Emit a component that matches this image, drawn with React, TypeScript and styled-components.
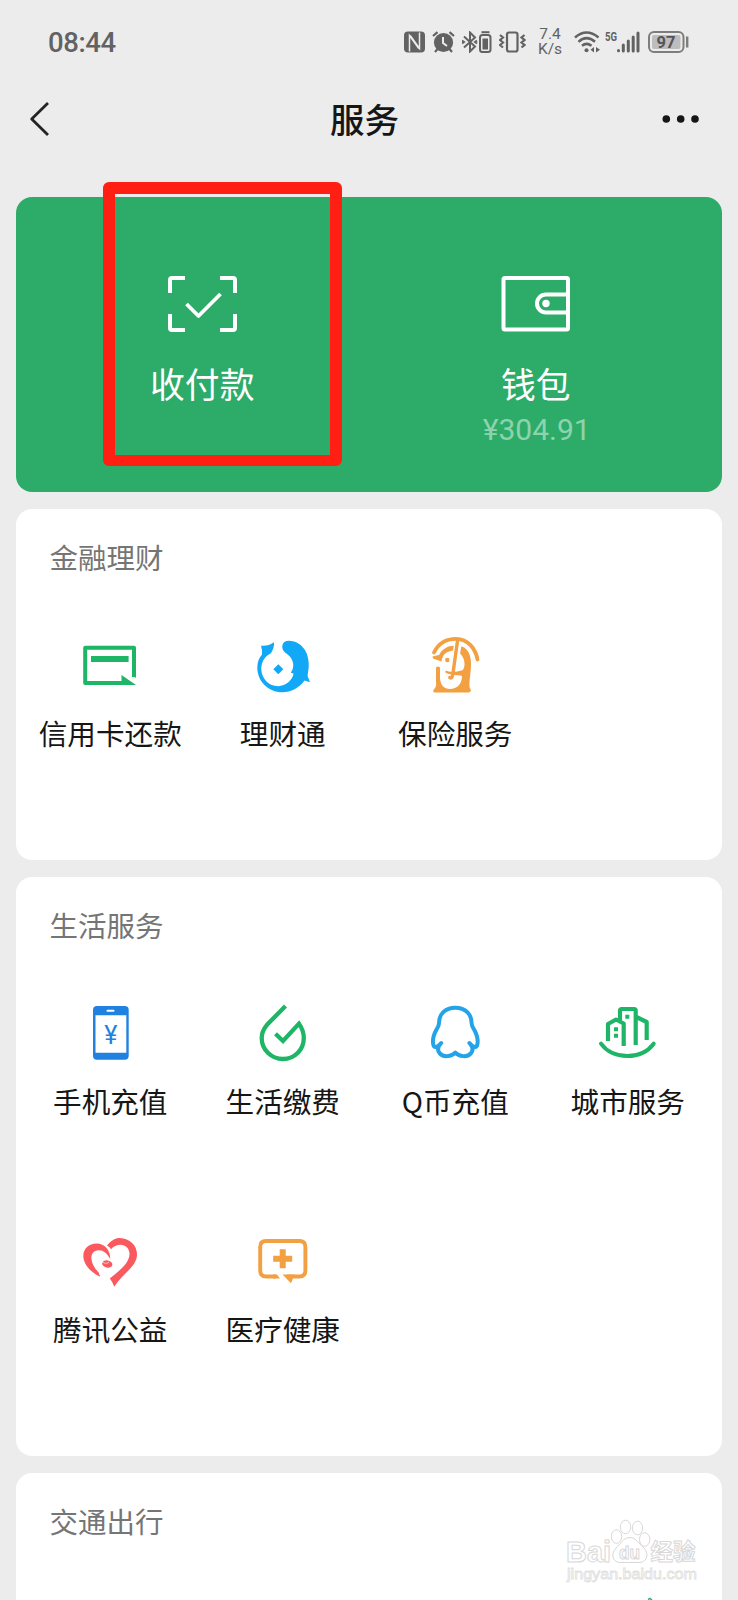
import React from "react";
import styled, { createGlobalStyle } from "styled-components";

const GlobalStyle = createGlobalStyle`
  * { box-sizing: border-box; }
  body {
    margin: 0;
    background: #ececec;
    font-family: "Noto Sans CJK SC", "Noto Sans", sans-serif;
    color: #161616;
  }
  svg { display: block; flex: none; }
`;

const Screen = styled.div`
  position: relative;
  width: 738px;
  height: 1600px;
  overflow: hidden;
  display: flex;
  flex-direction: column;
  background: #ececec;
`;

/* ---------- status bar ---------- */

const StatusBar = styled.div`
  height: 84px;
  flex: none;
  padding: 0 49px 0 48px;
  display: flex;
  align-items: center;
  justify-content: space-between;
  color: #626262;
  font-family: Roboto, sans-serif;
`;

const Clock = styled.span`
  margin-top: 1px;
  font-size: 27.5px;
  font-weight: 500;
  letter-spacing: -0.4px;
  line-height: 32px;
`;

const StatusIcons = styled.div`
  display: flex;
  align-items: center;
`;

const StatusSlot = styled.span<{ $gap: number }>`
  margin-left: ${(p) => p.$gap}px;
  display: flex;
`;

const Speed = styled.span`
  width: 24px;
  margin-left: 12px;
  display: flex;
  flex-direction: column;
  align-items: center;
  font-size: 15.5px;
  line-height: 15px;
`;

/* ---------- title bar ---------- */

const TitleBar = styled.header`
  height: 113px;
  flex: none;
  padding: 17px 38px 0 29px;
  display: grid;
  grid-template-columns: 60px 1fr 60px;
  align-items: start;
`;

const Title = styled.h1`
  margin: -3px 0 0;
  text-align: center;
  font-size: 34.5px;
  font-weight: 500;
  line-height: 40px;
`;

const BarButton = styled.span<{ $end?: boolean }>`
  height: 36px;
  display: flex;
  align-items: center;
  justify-content: ${(p) => (p.$end ? "flex-end" : "flex-start")};
`;

/* ---------- cards ---------- */

const Cards = styled.main`
  flex: 1;
  padding: 0 16px;
  display: flex;
  flex-direction: column;
  gap: 17px;
`;

const PayCard = styled.section`
  position: relative;
  height: 295px;
  flex: none;
  padding: 78px 19.5px 0;
  border-radius: 16px;
  background: #2dac69;
  display: grid;
  grid-template-columns: 1fr 1fr;
`;

const PayEntry = styled.div`
  display: flex;
  flex-direction: column;
  align-items: center;
  color: #fff;
`;

const PayLabel = styled.span`
  margin-top: 28px;
  font-size: 34.8px;
  line-height: 46px;
`;

const Amount = styled.span`
  margin: 6px 0 0 2px;
  font-family: Roboto, sans-serif;
  font-size: 30px;
  font-weight: 400;
  line-height: 36px;
  color: #8fd3ae;
`;

const Highlight = styled.div`
  position: absolute;
  left: 87px;
  top: -15px;
  width: 239px;
  height: 284px;
  border: 12px solid #ff1f13;
  border-bottom-width: 11px;
  border-radius: 6px;
`;

const Card = styled.section<{ $last?: boolean }>`
  flex: ${(p) => (p.$last ? "1" : "none")};
  padding: 0 8px 23px;
  border-radius: ${(p) => (p.$last ? "16px 16px 0 0" : "16px")};
  background: #fff;
`;

const CardTitle = styled.h2`
  margin: 0;
  height: 100px;
  padding: 27px 0 0 25.5px;
  font-size: 28.5px;
  font-weight: 400;
  line-height: 42px;
  color: #757575;
`;

const Grid = styled.div`
  display: grid;
  grid-template-columns: repeat(4, 1fr);
  grid-auto-rows: 228px;
`;

const Entry = styled.div`
  padding-top: 27px;
  display: flex;
  flex-direction: column;
  align-items: center;
`;

const EntryLabel = styled.span`
  margin-top: 16px;
  font-size: 28.6px;
  line-height: 42px;
  white-space: nowrap;
`;

const Watermark = styled.div`
  position: absolute;
  left: 560px;
  top: 1514px;
`;

/* ---------- service icons ---------- */

const Icon = ({ children }: { children: React.ReactNode }) => (
  <svg width="60" height="60" viewBox="0 0 60 60" fill="none">
    {children}
  </svg>
);

const GREEN = "#1fb566";
const SKY = "#12a8f8";
const ORANGE = "#f2a041";
const RED = "#fa5a5e";

const CardIcon = () => (
  <Icon>
    <path d="M42 47H5.2V11.7H54V41" stroke={GREEN} strokeWidth="4" strokeLinejoin="round" />
    <path d="M41.5 39 56 48.9H41.5zM52 38.8l4 3.2v-5h-4z" fill={GREEN} />
    <path d="M11 20h37.6v6H11z" fill={GREEN} />
  </Icon>
);

const FishIcon = () => (
  <Icon>
    <path
      d="M8 9.700Q15 10.500 21 6.300Q21.500 12 17.800 17.200C11 20.500 8 27 8.300 34C9 43 16 50.200 25 50.200C33 50.200 39.500 44 40.500 37.600L37.800 36.700Q40.500 33 40.300 29C40 23 36 19 32.500 17C27.500 13 28 4.700 36 4.700C47 5 55.300 14 55.700 27C56 33 54.800 37 54.600 40L57 46.300L51.500 44.500C46 52 38 56.300 29.500 56.300C15 56.300 4.500 45 4.300 32C4.300 26 6 22 9 18.500Q9.500 14 8 9.700Z"
      fill={SKY}
    />
    <path d="M25.300 28.300 30.300 33.300 25.300 38.300 20.300 33.300z" fill={SKY} />
  </Icon>
);

const InsuranceIcon = () => (
  <Icon>
    <path d="M9 16.500C13.500 7 22 2.800 31 2.800C43 3 50.500 12.500 52.500 23.500" stroke={ORANGE} strokeWidth="3.800" strokeLinecap="round" />
    <path
      d="M7.500 20.500L14 19C17 13 23 9.700 29 9.700L37 10.500C43 13 46 19 46 28C46 37 44 45 44.500 51L46 54.500Q45.500 56.500 43.500 56.500H10Q7.500 56 8.500 54C11 51 11.500 50 11 46L11 31.500Q13 29.500 15 31.500L15 43C16 49.500 19 53 25 53C32 53 37 48 37 40L33 38C37.500 36 39.700 32 39.500 27.500C39.300 22 36.500 18 32.500 15.500C26 13.500 20.500 16 18 20.500Q16.500 23.500 16.500 25.500L8 22.500Z"
      fill={ORANGE}
    />
    <path d="M33 7.500 28 36" stroke="#fff" strokeWidth="7.500" />
    <path d="M32.700 3.500 27.800 38.500Q27 43 24.800 41.500" stroke={ORANGE} strokeWidth="3.400" strokeLinecap="round" />
    <path d="M20.500 34.500Q27 37.500 38 34L36.500 39.500Q27 39.500 20.500 36.800z" fill={ORANGE} />
    <circle cx="22.300" cy="24" r="2.200" fill={ORANGE} />
  </Icon>
);

const PhoneIcon = () => (
  <Icon>
    <rect x="13" y="2" width="35.700" height="53.700" rx="4" fill="#1f82e0" />
    <path d="M15.500 11.300h30.800v37.400H15.500z" fill="#fff" />
    <path d="M27.500 6.800h6" stroke="#fff" strokeWidth="2" strokeLinecap="round" />
    <text x="30.800" y="40" textAnchor="middle" fontFamily="Roboto, sans-serif" fontSize="25" fontWeight="400" fill="#1f82e0">
      ¥
    </text>
  </Icon>
);

const DropIcon = () => (
  <Icon>
    <path
      d="M32.500 2 14 20.800C10 25.500 8.700 29 8.700 34C8.700 45.500 18 55 30 55C42 55 50.800 45.500 50.800 34C50.800 28 49 24 46 19.600L30 37 22.500 29.800"
      stroke={GREEN}
      strokeWidth="4.300"
    />
  </Icon>
);

const PenguinIcon = () => (
  <Icon>
    <path
      d="M30.300 3.700C20 3.700 14 10.500 14 19C14 22 13 23 11.500 25.500C8.500 31 7.300 36.500 8.300 40.500C9 44 12 44 16.200 39C12.500 43 12 46 14.500 49C18 54 27 52.500 30.300 48.500C33.600 52.500 42.600 54 46.100 49C48.600 46 48.100 43 44.400 39C48.600 44 51.600 44 52.300 40.500C53.300 36.500 52.100 31 49.100 25.500C47.600 23 46.600 22 46.600 19C46.600 10.500 40.600 3.700 30.300 3.700Z"
      stroke="#24a4e8"
      strokeWidth="4"
      strokeLinejoin="round"
    />
  </Icon>
);

const CityIcon = () => (
  <Icon>
    <path d="M3 39.700C9 48 19 52 29.300 52C40 52 49.500 48 55.700 39.700" stroke={GREEN} strokeWidth="4" strokeLinecap="round" />
    <path
      d="M10 37V20L18 15.500 25.700 19.500V42M22 16V6.500Q22 5 23.500 5H36Q37.700 5 37.700 6.500V41M38.500 13 48.700 18V36"
      stroke={GREEN}
      strokeWidth="4.200"
      strokeLinejoin="round"
    />
    <path d="M27.300 10.700h4v4h-4zM16 23.200h4v4h-4zM16 29.700h4v4h-4z" fill={GREEN} />
  </Icon>
);

const HeartIcon = () => (
  <Icon>
    <path
      d="M27 13.500C31 8.500 35 6 40 6C50 6.300 57.500 14 57 23C56.500 35 42 42 34.300 54.700Q32 49 29.800 46.500C39 39 48.500 32 49.500 23C50 16.500 45.500 12.500 40 12.700C36 12.800 33 14.800 31 17.300Q29.500 14.500 27 13.500Z"
      fill={RED}
    />
    <path
      d="M20.200 44.700C15 42.500 3.500 35 3.300 24C3.300 16.500 9 11.500 16.500 11.500C25 11.800 30.500 18 30.200 27C27.500 21.500 23.500 18 18.500 18.200C13.500 18.500 11 22 11.500 27C12 32.500 15.500 37 18.500 40.200Z"
      fill={RED}
    />
    <ellipse cx="27.300" cy="32" rx="5.200" ry="3.600" transform="rotate(12 27.300 32)" fill={RED} />
    <path d="M22.500 30.200Q27 32.500 29 30" stroke="#fff" strokeWidth=".6" />
  </Icon>
);

const MedicalIcon = () => (
  <Icon>
    <path
      d="M23 44.500H13Q7.200 44.500 7.200 38.500V15Q7.200 9 13 9H46.500Q52.400 9 52.400 15V38.500Q52.400 44.500 46.500 44.500H34"
      stroke={ORANGE}
      strokeWidth="3.900"
    />
    <path d="M20 42.500 24 42.500 27 46.450H20zM29.500 42.500H41.500L40 46.500 38 51.300z" fill={ORANGE} />
    <path d="M29.700 17.300V36.300M20.200 26.800H39.200" stroke={ORANGE} strokeWidth="6" />
  </Icon>
);

/* ---------- data ---------- */

type Service = { name: string; icon: React.FC };

const sections: { title: string; items: Service[] }[] = [
  {
    title: "金融理财",
    items: [
      { name: "信用卡还款", icon: CardIcon },
      { name: "理财通", icon: FishIcon },
      { name: "保险服务", icon: InsuranceIcon },
    ],
  },
  {
    title: "生活服务",
    items: [
      { name: "手机充值", icon: PhoneIcon },
      { name: "生活缴费", icon: DropIcon },
      { name: "Q币充值", icon: PenguinIcon },
      { name: "城市服务", icon: CityIcon },
      { name: "腾讯公益", icon: HeartIcon },
      { name: "医疗健康", icon: MedicalIcon },
    ],
  },
  { title: "交通出行", items: [] },
];

const Status = () => (
  <StatusBar>
    <Clock>08:44</Clock>
    <StatusIcons>
      <svg width="21" height="22" viewBox="0 0 21 22">
        <rect x="0" y=".5" width="21" height="21" rx="4" fill="#626262" />
        <path d="M5.500 20.500V4.500L14.800 17.500M15.500 1.500V17.500L6.200 4.500" fill="none" stroke="#ececec" strokeWidth="1.500" />
      </svg>
      <StatusSlot $gap={7}>
        <svg width="23" height="22" viewBox="0 0 23 22" fill="none" stroke="#626262">
          <circle cx="11.500" cy="11.500" r="9.600" fill="#626262" stroke="none" />
          <path d="M1 5 5.500 1.200M22 5 17.500 1.200M5.500 18 3 21M17.500 18 20 21" strokeWidth="2.200" />
          <path d="M11 6v6l4 3" stroke="#ececec" strokeWidth="2" />
        </svg>
      </StatusSlot>
      <StatusSlot $gap={7}>
        <svg width="30" height="22" viewBox="0 0 30 22" fill="none" stroke="#626262" strokeWidth="2">
          <path d="M2 5.500 13 15.500 8 20.500V1.500L13 6.500 2 16.500M0 9.500l2 1.500-2 1.500M15 9.500 13 11l2 1.500" />
          <rect x="18" y="4" width="10.500" height="17" rx="2.500" />
          <path d="M19.500 1.200h8" />
          <path d="M20.500 7.500h5.500v11h-5.500z" fill="#626262" stroke="none" />
        </svg>
      </StatusSlot>
      <StatusSlot $gap={7}>
        <svg width="27" height="22" viewBox="0 0 27 22" fill="none" stroke="#626262" strokeWidth="2.200">
          <rect x="8" y="1.500" width="10.500" height="19" rx="2" />
          <path d="M1 4l3 2.500-3 2.500 3 2.500-3 2.500 3 2.500M25.500 4l-3 2.500 3 2.500-3 2.500 3 2.500-3 2.500" />
        </svg>
      </StatusSlot>
      <Speed>
        <span>7.4</span>
        <span>K/s</span>
      </Speed>
      <StatusSlot $gap={12}>
        <svg width="27" height="22" viewBox="0 0 27 22" fill="none" stroke="#626262" strokeWidth="2.500">
          <path d="M1 6.500Q12.500-3.500 24.500 6.500M4.500 10.800Q12.500 3.500 21 10.800M8 14.800Q12.500 11 17.500 14.800" />
          <circle cx="12.500" cy="19.300" r="2" fill="#626262" stroke="none" />
          <path d="M16.500 18.700 20 16v5.500zM26 18.700 22 16v5.500z" fill="#626262" stroke="none" />
        </svg>
      </StatusSlot>
      <StatusSlot $gap={4}>
        <svg width="35" height="22" viewBox="0 0 35 22">
          <text x="0" y="9.500" fontFamily="Roboto, sans-serif" fontSize="12.500" fontWeight="700" textLength="12" lengthAdjust="spacingAndGlyphs" fill="#626262">
            5G
          </text>
          <path
            d="M13.500 19.500v.2M18.300 20V14M23.300 20V10M28.200 20V6M33 20V2"
            fill="none"
            stroke="#626262"
            strokeWidth="3"
            strokeLinecap="round"
          />
        </svg>
      </StatusSlot>
      <StatusSlot $gap={8}>
        <svg width="41" height="22" viewBox="0 0 41 22">
          <rect x="1" y="1" width="34.500" height="20" rx="5" fill="none" stroke="#7d7d7d" strokeWidth="2" />
          <rect x="4" y="4" width="28.500" height="14" rx="2" fill="#bdbdbd" />
          <path d="M39.200 5.500v11" stroke="#7d7d7d" strokeWidth="2.400" />
          <text x="18" y="17" textAnchor="middle" fontFamily="Roboto, sans-serif" fontSize="16.500" fontWeight="700" fill="#555">
            97
          </text>
        </svg>
      </StatusSlot>
    </StatusIcons>
  </StatusBar>
);

export default function App() {
  return (
    <>
      <GlobalStyle />
      <Screen>
        <Status />
        <TitleBar>
          <BarButton>
            <svg width="22" height="36" viewBox="0 0 22 36" fill="none">
              <path d="M19 2 2.700 18 19 34" stroke="#242424" strokeWidth="2.800" strokeLinejoin="round" />
            </svg>
          </BarButton>
          <Title>服务</Title>
          <BarButton $end>
            <svg width="40" height="10" viewBox="0 0 40 10" fill="#161616">
              <circle cx="6.300" cy="5" r="3.800" />
              <circle cx="20.700" cy="5" r="3.800" />
              <circle cx="35" cy="5" r="3.800" />
            </svg>
          </BarButton>
        </TitleBar>
        <Cards>
          <PayCard>
            <PayEntry>
              <svg width="69" height="57" viewBox="0 0 69 57" fill="none" stroke="#fff" strokeWidth="4">
                <path d="M2 18V5Q2 3 4 3H17M52 3H65Q67 3 67 5V18M67 39V53Q67 55 65 55H52M17 55H4Q2 55 2 53V39" />
                <path d="M18.500 29 30.500 41 52.500 19" strokeWidth="3.800" strokeLinejoin="round" />
              </svg>
              <PayLabel>收付款</PayLabel>
            </PayEntry>
            <PayEntry>
              <svg width="69" height="57" viewBox="0 0 69 57" fill="none" stroke="#fff" strokeWidth="4">
                <rect x="2.500" y="3" width="64.500" height="51.500" rx="1.500" />
                <path d="M66 19.500H45A9 9 0 0 0 45 37.500H66" />
                <circle cx="45" cy="28.500" r="3.700" fill="#fff" stroke="none" />
              </svg>
              <PayLabel>钱包</PayLabel>
              <Amount>¥304.91</Amount>
            </PayEntry>
            <Highlight />
          </PayCard>
          {sections.map((section, i) => (
            <Card key={section.title} $last={i === sections.length - 1}>
              <CardTitle>{section.title}</CardTitle>
              <Grid>
                {section.items.map(({ name, icon: Glyph }) => (
                  <Entry key={name}>
                    <Glyph />
                    <EntryLabel>{name}</EntryLabel>
                  </Entry>
                ))}
              </Grid>
            </Card>
          ))}
        </Cards>
        <Watermark>
          <svg width="145" height="86" viewBox="0 0 145 86" fill="#fff" stroke="#d8d8d8" strokeWidth="1">
            <ellipse cx="56.500" cy="22.500" rx="5.200" ry="6.800" />
            <ellipse cx="65.500" cy="13" rx="5.200" ry="6.800" />
            <ellipse cx="77.500" cy="14" rx="5.200" ry="6.800" />
            <ellipse cx="84.700" cy="25.500" rx="5.200" ry="6.800" />
            <path d="M70 23.500C76 23.500 79 30 84 34C90 41 86 49 79 48.500H61C53 49 50 41 56 34C61 30 63 23.500 70 23.500Z" />
            <text x="6" y="47.500" fontFamily="Liberation Sans, sans-serif" fontSize="29" fontWeight="700" textLength="45" lengthAdjust="spacingAndGlyphs">
              Bai
            </text>
            <text x="59" y="44.500" fontFamily="Liberation Sans, sans-serif" fontSize="18" fontWeight="700" textLength="21" lengthAdjust="spacingAndGlyphs">
              du
            </text>
            <text x="90.500" y="45.500" fontFamily="Noto Sans CJK SC, sans-serif" fontSize="22.500" fontWeight="700">
              经验
            </text>
            <text x="7" y="65" fontFamily="Liberation Sans, sans-serif" fontSize="15" textLength="130" lengthAdjust="spacingAndGlyphs" strokeWidth=".8" stroke="#e0e0e0">
              jingyan.baidu.com
            </text>
            <path d="M88 85.500 90 84.500 92 86" stroke="#3aa987" fill="none" strokeWidth="1.500" />
          </svg>
        </Watermark>
      </Screen>
    </>
  );
}
